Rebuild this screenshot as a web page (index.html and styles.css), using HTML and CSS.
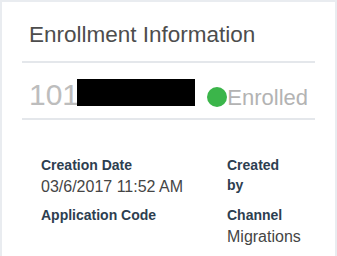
FILE: index.html
```html
<!DOCTYPE html>
<html lang="en">

<head>
    <meta charset="UTF-8">
    <meta name="viewport" content="width=device-width, initial-scale=1.0">
    <title>Enrollment Information</title>
    <link rel="stylesheet" href="styles.css">
</head>

<body>
    <div class="card">
        <div class="card-head">Enrollment Information</div>
        <div class="id-row">
            <span class="id-num">101<span class="redact"></span></span>
            <span class="status"><span class="dot"></span>Enrolled</span>
        </div>
        <div class="details">
            <div class="item">
                <div class="label">Creation Date</div>
                <div class="value">03/6/2017 11:52 AM</div>
            </div>
            <div class="item">
                <div class="label">Created by</div>
                <div class="value"></div>
            </div>
            <div class="item">
                <div class="label">Application Code</div>
                <div class="value"></div>
            </div>
            <div class="item">
                <div class="label">Channel</div>
                <div class="value">Migrations</div>
            </div>
        </div>
    </div>
</body>

</html>
```

FILE: styles.css
```css
* {
    margin: 0;
    padding: 0;
    box-sizing: border-box;
}

body {
    background-color: #e9ecf0;
    font-family: "Liberation Sans", Arial, sans-serif;
}

.card {
    background-color: #fff;
    margin: 2px 2px 0 2px;
    padding: 0 20px;
    height: 254px;
}

.card-head {
    font-size: 22.5px;
    line-height: 26px;
    color: #4d4d4d;
    padding: 20px 7px 13px 7px;
    border-bottom: 2px solid #e4e7eb;
}

.id-row {
    display: flex;
    justify-content: space-between;
    align-items: baseline;
    padding: 15px 7px 6px 7px;
    border-bottom: 2px solid #e4e7eb;
}

.id-num {
    font-size: 30px;
    line-height: 34px;
    color: #bdbdbd;
}

.redact {
    display: inline-block;
    width: 118px;
    height: 27px;
    margin-left: -2px;
    background-color: #000;
    vertical-align: -1px;
}

.status {
    font-size: 22px;
    line-height: 27px;
    color: #b3b3b3;
}

.dot {
    display: inline-block;
    width: 20px;
    height: 20px;
    border-radius: 50%;
    background-color: #3bb54a;
    vertical-align: -2px;
}

.details {
    display: grid;
    grid-template-columns: 186px 72px;
    row-gap: 7px;
    padding: 35px 0 0 19px;
}

.label {
    font-size: 14px;
    font-weight: bold;
    line-height: 20px;
    color: #2d3e50;
}

.value {
    font-size: 16px;
    line-height: 23px;
    color: #454545;
    white-space: nowrap;
}
```
